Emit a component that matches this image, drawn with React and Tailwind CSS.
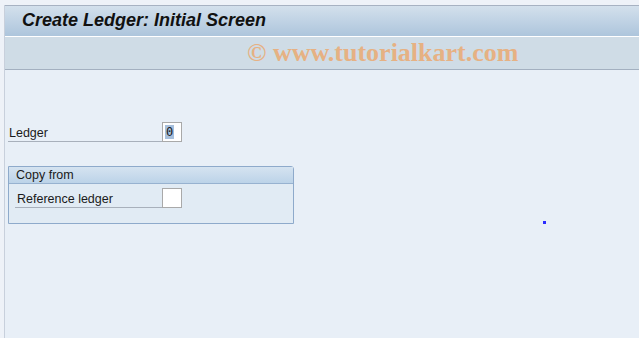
export default function App() {
  return (
    <div className="relative w-[639px] h-[338px] overflow-hidden bg-[#eef2f8] pt-[5px] font-['Liberation_Sans',Arial,sans-serif]">
      <div className="ml-[4px] h-[333px] border-l border-[#c8d0dc] bg-[#e8eff7]">
        {/* title bar */}
        <div className="h-[31px] border-t border-[#a7b2c2] bg-gradient-to-b from-[#d3e0ec] to-[#adc5dc] pl-[17px] pt-[4px]">
          <h1 className="text-[18px] font-bold italic leading-[20px] text-[#111]">
            Create Ledger: Initial Screen
          </h1>
        </div>
        {/* toolbar */}
        <div className="h-[34px] border-t border-white border-b border-b-[#a3b0c0] bg-[#cfdce6] flex items-center pl-[242px]">
          <span className="font-['Liberation_Serif',serif] font-bold text-[26px] leading-[28px] text-[#e6b183]">
            © www.tutorialkart.com
          </span>
        </div>
        {/* body */}
        <div className="pl-[3px] pt-[52px] text-[12.5px] text-[#1a1a1a]">
          <div className="flex items-end h-[20px]">
            <div className="w-[154px] h-[20px] border-b border-[#a8b0bb] pl-[1px] leading-[20px] pt-[1px]">
              Ledger
            </div>
            <div className="w-[20px] h-[20px] bg-white border border-[#a9a9a9] flex items-center pl-[2px]">
              <span className="bg-[#a6bfdc] text-[12px] leading-[14px] px-[1px] font-['DejaVu_Sans_Mono',monospace]">0</span>
            </div>
          </div>

          <div className="mt-[24px] w-[286px] h-[58px] border border-[#8eaacb] rounded-tr-[3px] bg-[#e1ebf4]">
            <div className="h-[17px] bg-gradient-to-b from-[#d5e3f0] to-[#bcd3e8] border-b border-[#97b2d0] pl-[7px] leading-[16px]">
              Copy from
            </div>
            <div className="flex items-end h-[20px] mt-[4px] pl-[6px]">
              <div className="w-[147px] h-[20px] border-b border-[#a8b0bb] pl-[2px] leading-[20px] pt-[1px]">
                Reference ledger
              </div>
              <div className="w-[20px] h-[20px] bg-white border border-[#a9a9a9]" />
            </div>
          </div>
        </div>
      </div>
      <div className="absolute left-[543px] top-[221px] w-[3px] h-[3px] bg-[#2a2aff]" />
    </div>
  );
}
